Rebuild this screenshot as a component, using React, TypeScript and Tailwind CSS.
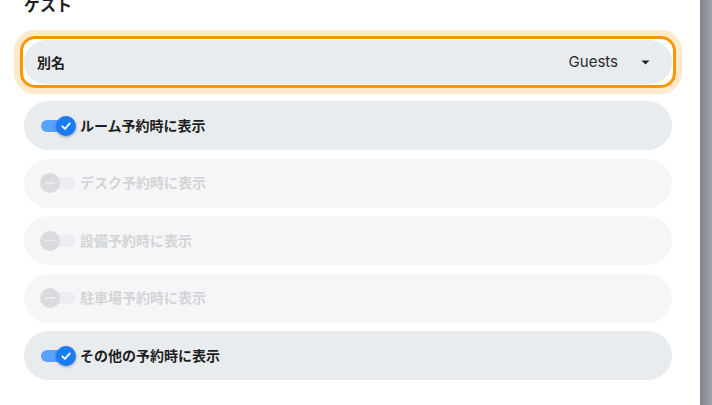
import React from "react";

const font = { fontFamily: 'Inter, "Noto Sans CJK JP", sans-serif' };

function Toggle({ on, disabled }: { on: boolean; disabled?: boolean }) {
  return (
    <div className="relative h-[20px] w-[36px] shrink-0">
      <div
        className={
          "absolute left-px top-[4px] h-[12px] w-[34px] rounded-full " +
          (disabled ? "bg-[#ebedf0]" : "bg-[#5aa2ff]")
        }
      />
      {on ? (
        <div className="absolute right-0 top-0 flex h-[20px] w-[20px] items-center justify-center rounded-full bg-[#1a7cf5] shadow-[0_1px_3px_rgba(0,0,0,0.35)]">
          <svg width="12" height="12" viewBox="0 0 12 12" fill="none">
            <path d="M2.3 6.3 L4.9 8.8 L9.8 3.4" stroke="white" strokeWidth="1.8" strokeLinecap="round" strokeLinejoin="round" />
          </svg>
        </div>
      ) : (
        <div className="absolute left-0 top-0 flex h-[20px] w-[20px] items-center justify-center rounded-full bg-[#dadbdc]">
          <div className="h-[1.5px] w-[10px] rounded-full bg-[#ececec]" />
        </div>
      )}
    </div>
  );
}

function Row({ label, on, disabled }: { label: string; on: boolean; disabled?: boolean }) {
  return (
    <div
      className={
        "flex h-[49px] items-center gap-[4px] rounded-full pl-[16px] " +
        (disabled ? "bg-[#f5f6f7]" : "bg-[#e9ecef]")
      }
    >
      <Toggle on={on} disabled={disabled} />
      <span
        className={
          "text-[14px] font-bold leading-none " +
          (disabled ? "text-[#d3d4d6]" : "text-[#1f1f1f]")
        }
      >
        {label}
      </span>
    </div>
  );
}

export default function App() {
  return (
    <div className="flex h-[405px] w-[712px] overflow-hidden bg-white" style={font}>
      <div className="flex w-[700px] flex-col pl-[24px] pr-[28px]">
        <div className="mt-[-7px] text-[16px] font-bold leading-[24px] text-[#222]">ゲスト</div>
        <div className="-mx-[4px] mt-[19px] rounded-[15px] border-[3px] border-[#ff9500] p-px shadow-[0_0_0_6px_#ffe9cc]">
          <div className="flex h-[44px] items-center rounded-full bg-[#e9ecef] pl-[13px] pr-[22px]">
            <span className="text-[14px] font-bold text-[#1f1f1f]">別名</span>
            <span className="ml-auto text-[15px] text-[#2a2a2a]">Guests</span>
            <svg className="ml-[23px]" width="9" height="5" viewBox="0 0 9 5">
              <path d="M0.5 0.5 L8.5 0.5 L4.5 4.5 Z" fill="#222" />
            </svg>
          </div>
        </div>
        <div className="mt-[13px] flex flex-col gap-[8.5px]">
          <Row label="ルーム予約時に表示" on />
          <Row label="デスク予約時に表示" on={false} disabled />
          <Row label="設備予約時に表示" on={false} disabled />
          <Row label="駐車場予約時に表示" on={false} disabled />
          <Row label="その他の予約時に表示" on />
        </div>
      </div>
      <div className="w-[12px] bg-gradient-to-r from-[#82858e] to-[#a0a3aa]" />
    </div>
  );
}
